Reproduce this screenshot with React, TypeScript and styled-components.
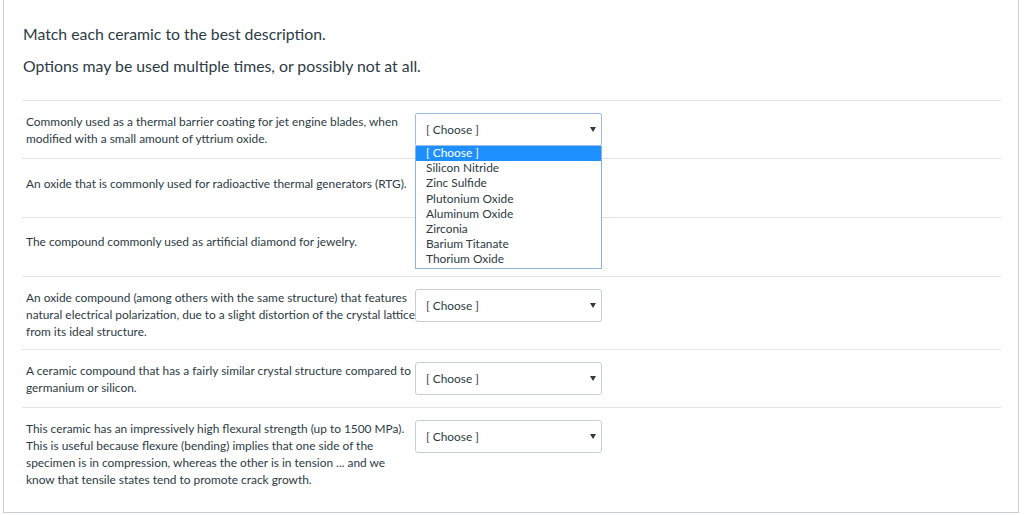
import React from "react";
import styled, { createGlobalStyle } from "styled-components";

const Global = createGlobalStyle`
  html, body { margin: 0; padding: 0; background: #fff; }
  body { font-family: Lato, "Open Sans", Arial, sans-serif; color: #2d3b45; }
`;

const Card = styled.div`
  margin: -1px 0 0 3px;
  width: 1016px;
  height: 514px;
  box-sizing: border-box;
  border: 1px solid #c7cdd1;
  padding: 0 17px 0 18px;
`;

const Header = styled.div`
  padding: 23px 0 23px 1px;
`;

const Para = styled.p`
  margin: 0;
  font-size: 15.8px;
  line-height: 22px;
  & + & { margin-top: 10px; }
`;

const Row = styled.div`
  position: relative;
  display: flex;
  align-items: flex-start;
  border-top: 1px solid #e2e5e8;
  padding: 12px 0 9px 4px;
`;

const Question = styled.div<{ $shift?: number }>`
  width: 389px;
  flex: none;
  font-size: 11.9px;
  line-height: 17px;
  padding-top: ${(p) => p.$shift ?? 0}px;
`;

const SelectBox = styled.div<{ $focused?: boolean }>`
  position: relative;
  width: 187px;
  height: 33px;
  margin-bottom: 3px;
  box-sizing: border-box;
  border: 1px solid ${(p) => (p.$focused ? "#9dbde8" : "#c7cdd1")};
  border-radius: ${(p) => (p.$focused ? "2px" : "3px")};
  background: #fff;
  display: flex;
  align-items: center;
  padding: 0 5px 1px 10px;
  font-size: 11.9px;
  color: #2d3b45;
`;

const SelectLabel = styled.span`
  flex: 1;
`;

const Arrow = styled.svg`
  width: 6px;
  height: 5px;
  fill: #2d3b45;
`;

const List = styled.ul`
  position: absolute;
  left: -1px;
  top: 32px;
  width: 187px;
  box-sizing: border-box;
  margin: 0;
  padding: 0;
  list-style: none;
  background: #fff;
  border: 1px solid #8fb1e0;
  border-top: none;
  z-index: 2;
`;

const Item = styled.li<{ $active?: boolean }>`
  height: 15.2px;
  line-height: 14px;
  padding-left: 10px;
  font-size: 11.9px;
  background: ${(p) => (p.$active ? "#1e8fff" : "#fff")};
  color: ${(p) => (p.$active ? "#fff" : "#2d3b45")};
`;

const Spacer = styled.div`
  height: 37px;
`;

const options = [
  "[ Choose ]",
  "Silicon Nitride",
  "Zinc Sulfide",
  "Plutonium Oxide",
  "Aluminum Oxide",
  "Zirconia",
  "Barium Titanate",
  "Thorium Oxide",
];

const questions: { text: string; shift?: number; hidden?: boolean; open?: boolean }[] = [
  {
    text: "Commonly used as a thermal barrier coating for jet engine blades, when modified with a small amount of yttrium oxide.",
    open: true,
  },
  {
    text: "An oxide that is commonly used for radioactive thermal generators (RTG).",
    shift: 4,
    hidden: true,
  },
  {
    text: "The compound commonly used as artificial diamond for jewelry.",
    shift: 3,
    hidden: true,
  },
  {
    text: "An oxide compound (among others with the same structure) that features natural electrical polarization, due to a slight distortion of the crystal lattice from its ideal structure.",
  },
  {
    text: "A ceramic compound that has a fairly similar crystal structure compared to germanium or silicon.",
  },
  {
    text: "This ceramic has an impressively high flexural strength (up to 1500 MPa). This is useful because flexure (bending) implies that one side of the specimen is in compression, whereas the other is in tension ... and we know that tensile states tend to promote crack growth.",
  },
];

function Select({ open }: { open?: boolean }) {
  return (
    <SelectBox $focused={open}>
      <SelectLabel>[ Choose ]</SelectLabel>
      <Arrow viewBox="0 0 6 5">
        <path d="M0 0 H6 L3 5 Z" />
      </Arrow>
      {open && (
        <List>
          {options.map((o, i) => (
            <Item key={o} $active={i === 0}>
              {o}
            </Item>
          ))}
        </List>
      )}
    </SelectBox>
  );
}

export default function App() {
  return (
    <>
      <Global />
      <Card>
        <Header>
          <Para>Match each ceramic to the best description.</Para>
          <Para>Options may be used multiple times, or possibly not at all.</Para>
        </Header>
        {questions.map((q, i) => (
          <Row key={i}>
            <Question $shift={q.shift}>{q.text}</Question>
            {q.hidden ? <Spacer /> : <Select open={q.open} />}
          </Row>
        ))}
      </Card>
    </>
  );
}
